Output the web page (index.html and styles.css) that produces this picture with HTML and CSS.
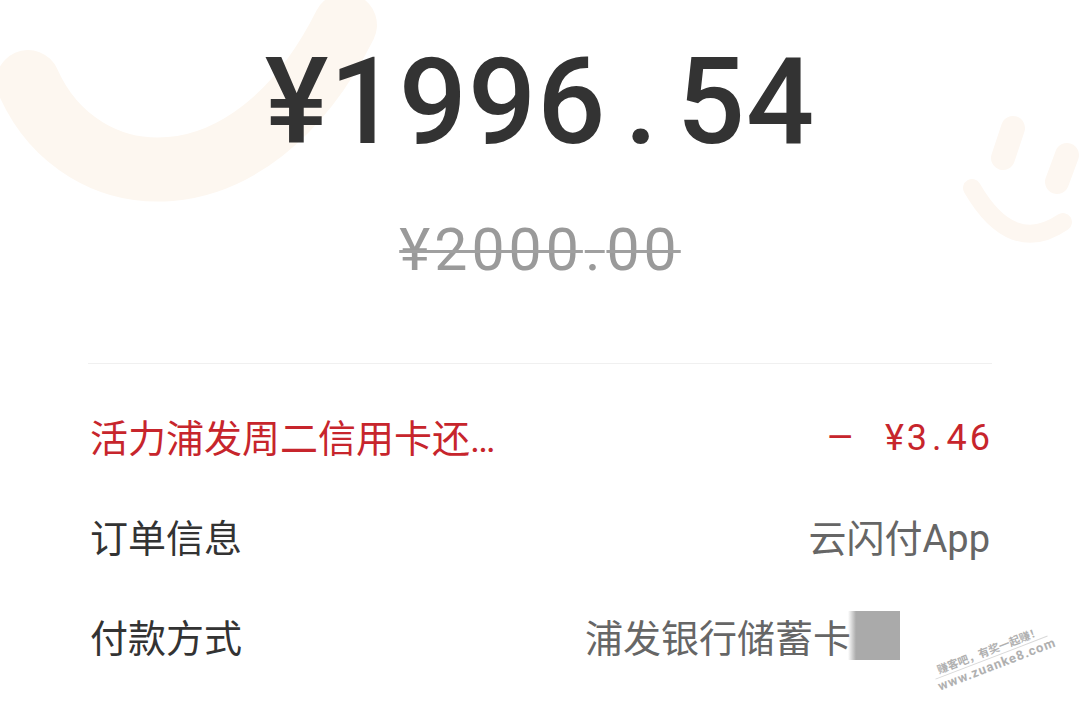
FILE: index.html
```html
<!DOCTYPE html>
<html lang="zh-CN">

<head>
    <meta charset="UTF-8">
    <meta name="viewport" content="width=device-width, initial-scale=1.0">
    <title>支付详情</title>
    <link rel="stylesheet" href="styles.css">
</head>

<body>
    <div class="page">
        <svg class="deco" width="1080" height="714" viewBox="0 0 1080 714">
            <path d="M28 82 C80 200, 250 215, 345 25" fill="none" stroke="#fdf7f0" stroke-width="64" stroke-linecap="round"/>
            <path d="M1013 128 L1003 158" fill="none" stroke="#fdf7f1" stroke-width="24" stroke-linecap="round"/>
            <path d="M1067 155 L1057 182" fill="none" stroke="#fdf7f1" stroke-width="24" stroke-linecap="round"/>
            <path d="M972 188 Q1012 257 1063 222" fill="none" stroke="#fdf7f1" stroke-width="18" stroke-linecap="round"/>
        </svg>

        <div class="amount">¥1996<span class="dot">.</span>54</div>
        <div class="origin">¥2000<span class="dot">.</span>00</div>

        <div class="list">
            <div class="row discount">
                <span class="label">活力浦发周二信用卡还款立减</span>
                <span class="value num"><span class="minus">–</span> ¥3<span class="dot">.</span>46</span>
            </div>
            <div class="row">
                <span class="label">订单信息</span>
                <span class="value">云闪付App</span>
            </div>
            <div class="row">
                <span class="label">付款方式</span>
                <span class="value card">浦发银行储蓄卡<span class="mask"></span></span>
            </div>
        </div>

        <div class="watermark">
            <div class="wm-title">赚客吧，有奖一起赚！</div>
            <div class="wm-url">www.zuanke8.com</div>
        </div>
    </div>
</body>

</html>
```

FILE: styles.css
```css
body {
    margin: 0;
    background: #ffffff;
    font-family: Roboto, "Noto Sans CJK SC", sans-serif;
}

.page {
    position: relative;
    width: 1080px;
    height: 714px;
    overflow: hidden;
    isolation: isolate;
}

.deco {
    position: absolute;
    top: 0;
    left: 0;
    z-index: -1;
}

.amount {
    padding-top: 42px;
    font-size: 120px;
    line-height: 120px;
    font-weight: 500;
    letter-spacing: 1px;
    color: #333333;
    text-align: center;
}

.amount .dot {
    margin: 0 18px;
}

.origin {
    margin-top: 58px;
    font-size: 59px;
    line-height: 59px;
    letter-spacing: 4px;
    color: #9a9a9a;
    text-align: center;
}

.origin span,
.origin {
    text-decoration: line-through;
    text-decoration-thickness: 3px;
    text-decoration-color: #a0a0a0;
}

.origin .dot {
    margin: 0 2px;
}

.list {
    margin: 84px 88px 0;
    border-top: 1px solid #f0f0f0;
    padding: 21px 2px 0;
}

.row {
    display: flex;
    justify-content: space-between;
    align-items: center;
    height: 100px;
    font-size: 38px;
    color: #333333;
}

.label {
    white-space: nowrap;
    overflow: hidden;
    text-overflow: ellipsis;
    max-width: 410px;
}

.value {
    color: #666666;
    white-space: nowrap;
    display: flex;
    align-items: center;
}

.discount,
.discount .value {
    color: #c7252c;
}

.num {
    font-size: 36px;
    letter-spacing: 3px;
    margin-right: -3px;
    padding-top: 6px;
}

.num .dot {
    margin: 0 2px;
}

.minus {
    display: inline-block;
    transform: scaleX(1.22);
    margin-right: 29px;
}

.card {
    padding-right: 90px;
}

.mask {
    display: inline-block;
    width: 52px;
    height: 49px;
    margin-left: -3px;
    background: linear-gradient(to right, rgba(170, 170, 170, 0), #aaaaaa 8px);
}

.watermark {
    position: absolute;
    left: 932px;
    top: 644px;
    width: 120px;
    transform: rotate(-21deg);
    color: #b0b0b0;
    text-align: center;
    line-height: 1.2;
}

.wm-title {
    font-size: 11px;
    font-weight: 700;
    border-bottom: 1px solid #d8d8d8;
}

.wm-url {
    font-size: 13px;
    font-weight: 700;
    letter-spacing: 1px;
}
```
